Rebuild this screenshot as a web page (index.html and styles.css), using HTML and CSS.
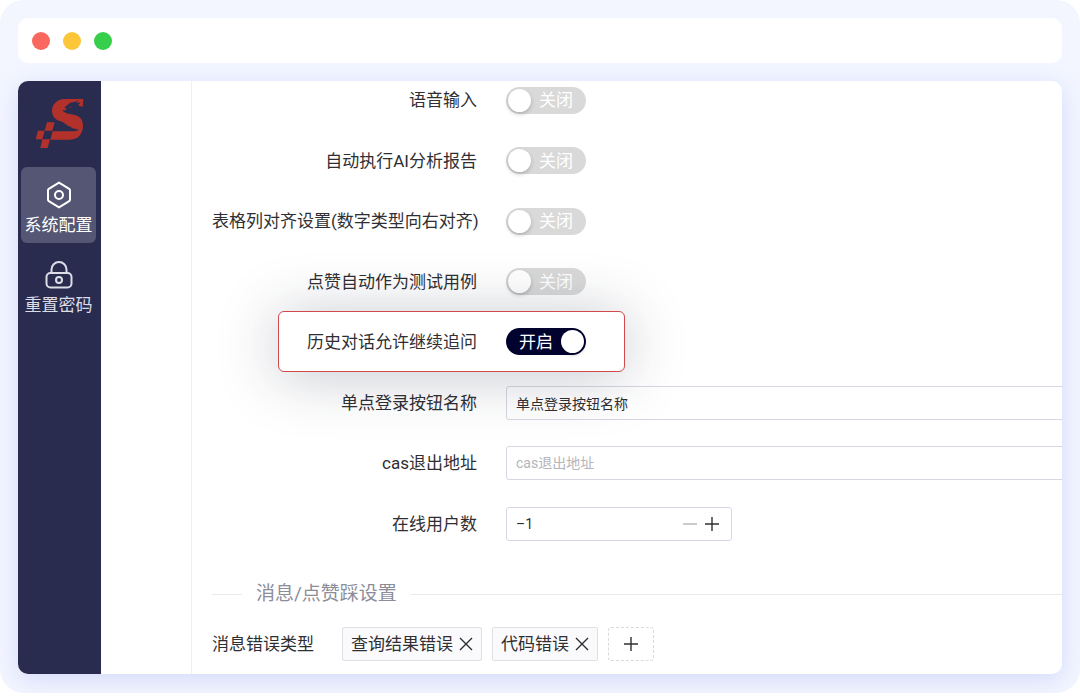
FILE: index.html
```html
<!DOCTYPE html>
<html lang="zh-CN">

<head>
    <meta charset="UTF-8">
    <meta name="viewport" content="width=device-width, initial-scale=1">
    <title>系统配置</title>
    <link rel="stylesheet" href="styles.css">
</head>

<body>
    <div class="frame">
        <header class="titlebar">
            <span class="dot red"></span>
            <span class="dot yellow"></span>
            <span class="dot green"></span>
        </header>

        <div class="window">
            <aside class="sidebar">
                <svg class="logo" viewBox="12 15 150 156" aria-hidden="true">
                    <path d="M160 21H105C80 22 66 37 66 58C67 77 79 86 96 89L106 94L102 95L114 99L111 101L126 105L122 107L147 113C142 117 134 118 124 118H68L61 143H120C145 143 158 126 159 103C160 79 143 69 124 67C110 65 100 61 97 54L107 55L110 50L103 47L113 38L121 32L136 29L145 25L139 33L153 31L144 40L158 45Z"/>
                    <path d="M51 91H74L67 116H44ZM24 116H44L37 142H17ZM37 142H60L53 168H31Z"/>
                    <circle cx="121" cy="46" r="2"/>
                </svg>
                <nav class="menu">
                    <a href="#config" class="menu-item active">
                        <svg viewBox="0 0 30 30" aria-hidden="true">
                            <path d="M15 2.6L25.2 8.8Q26 9.300 26 10.200V19.800Q26 20.700 25.200 21.200L15 27.400L4.800 21.200Q4 20.700 4 19.800V10.200Q4 9.300 4.800 8.800Z"/>
                            <circle cx="15" cy="15" r="4"/>
                        </svg>
                        系统配置
                    </a>
                    <a href="#password" class="menu-item">
                        <svg viewBox="0 0 30 30" aria-hidden="true">
                            <path d="M7.500 13V9.500A7.500 7.500 0 0 1 22.500 9.500V13"/>
                            <rect x="2.500" y="13" width="25" height="14.500" rx="4"/>
                            <circle cx="15" cy="20" r="3"/>
                        </svg>
                        重置密码
                    </a>
                </nav>
            </aside>
            <div class="submenu"></div>

            <main class="content">
                <form>
                    <div class="rows">
                        <div class="row">
                            <label class="name" for="voice">语音输入</label>
                            <label class="switch"><input type="checkbox" id="voice"><span>关闭</span></label>
                        </div>
                        <div class="row">
                            <label class="name" for="report">自动执行AI分析报告</label>
                            <label class="switch"><input type="checkbox" id="report"><span>关闭</span></label>
                        </div>
                        <div class="row">
                            <label class="name" for="align">表格列对齐设置(数字类型向右对齐)</label>
                            <label class="switch"><input type="checkbox" id="align"><span>关闭</span></label>
                        </div>
                        <div class="row">
                            <label class="name" for="like">点赞自动作为测试用例</label>
                            <label class="switch"><input type="checkbox" id="like"><span>关闭</span></label>
                        </div>
                        <div class="row highlight">
                            <label class="name" for="history">历史对话允许继续追问</label>
                            <label class="switch"><input type="checkbox" id="history" checked><span>开启</span></label>
                        </div>
                        <div class="row">
                            <label class="name" for="sso">单点登录按钮名称</label>
                            <input class="field" type="text" id="sso" value="单点登录按钮名称">
                        </div>
                        <div class="row">
                            <label class="name" for="cas">cas退出地址</label>
                            <input class="field" type="text" id="cas" placeholder="cas退出地址">
                        </div>
                        <div class="row">
                            <label class="name" for="online">在线用户数</label>
                            <div class="number">
                                <input type="text" inputmode="numeric" id="online" value="–1">
                                <button type="button" class="minus" aria-label="减少">
                                    <svg viewBox="0 0 14 14"><path d="M0 7H14"/></svg>
                                </button>
                                <button type="button" aria-label="增加">
                                    <svg viewBox="0 0 14 14"><path d="M0 7H14M7 0V14"/></svg>
                                </button>
                            </div>
                        </div>
                    </div>

                    <h2 class="divider">消息/点赞踩设置</h2>

                    <div class="tags">
                        <span class="tags-name">消息错误类型</span>
                        <span class="tag">查询结果错误
                            <button type="button" aria-label="删除查询结果错误">
                                <svg viewBox="0 0 14 14"><path d="M1 1L13 13M13 1L1 13"/></svg>
                            </button>
                        </span>
                        <span class="tag">代码错误
                            <button type="button" aria-label="删除代码错误">
                                <svg viewBox="0 0 14 14"><path d="M1 1L13 13M13 1L1 13"/></svg>
                            </button>
                        </span>
                        <button type="button" class="add" aria-label="添加">
                            <svg viewBox="0 0 14 14"><path d="M0 7H14M7 0V14"/></svg>
                        </button>
                    </div>
                </form>
            </main>
        </div>
    </div>
</body>

</html>
```
FILE: styles.css
```css
* {
    box-sizing: border-box;
    margin: 0;
    padding: 0;
}

body {
    background-color: #fff;
    color: #2f2f33;
    font-family: Roboto, "Noto Sans CJK SC", sans-serif;
    font-size: 17px;
    line-height: 24px;
}

input,
button {
    font-family: inherit;
    color: inherit;
}

button {
    display: flex;
    align-items: center;
    justify-content: center;
    border: none;
    background: none;
    cursor: pointer;
}

button svg {
    width: 14px;
    height: 14px;
    fill: none;
    stroke: currentColor;
    stroke-width: 1.4;
}

.frame {
    padding: 18px 18px 19px;
    border-radius: 24px;
    background-color: #f3f6ff;
    overflow: hidden;
}

.titlebar {
    display: flex;
    align-items: center;
    gap: 13px;
    padding: 14px 14px 13px;
    border-radius: 10px;
    background-color: #fff;
}

.dot {
    width: 18px;
    height: 18px;
    border-radius: 50%;
}

.red {
    background-color: #f9675f;
}

.yellow {
    background-color: #fbc638;
}

.green {
    background-color: #35cf4b;
}

.window {
    display: flex;
    margin-top: 18px;
    border-radius: 10px;
    background-color: #fff;
    box-shadow: 0 6px 24px rgba(90, 112, 230, 0.2);
    overflow: hidden;
}

/* sidebar */
.sidebar {
    flex: none;
    width: 83px;
    padding: 16px 5px 16px 3px;
    background-color: #292c4f;
}

.logo {
    display: block;
    width: 50px;
    height: 52px;
    margin: 0 auto 18px 13px;
    fill: #b2322b;
}

.menu {
    display: flex;
    flex-direction: column;
    gap: 4px;
}

.menu-item {
    display: flex;
    flex-direction: column;
    align-items: center;
    padding: 13px 0 6px;
    gap: 3px;
    border-radius: 6px;
    color: #dcdde6;
    text-decoration: none;
    white-space: nowrap;
}

.menu-item svg {
    width: 30px;
    height: 30px;
    fill: none;
    stroke: currentColor;
    stroke-width: 2;
    stroke-linejoin: round;
}

.menu-item.active {
    background-color: #545673;
    color: #fff;
}

.submenu {
    flex: none;
    width: 91px;
    border-right: 1px solid #f0f0f3;
}

/* settings form */
.content {
    flex: 1;
    min-width: 0;
    padding: 2px 0 13px 20px;
}

.rows {
    display: flex;
    flex-direction: column;
    justify-content: space-between;
    min-height: 458px;
}

.row {
    display: flex;
    align-items: center;
    gap: 29px;
    height: 34px;
}

.name {
    flex: none;
    width: 265px;
    text-align: right;
    white-space: nowrap;
}

.switch {
    display: flex;
    align-items: center;
    gap: 8px;
    width: 80px;
    height: 27px;
    padding: 0 2px;
    border-radius: 14px;
    background-color: #d9d9d9;
    color: #fff;
    cursor: pointer;
}

.switch input {
    appearance: none;
    width: 23px;
    height: 23px;
    border-radius: 50%;
    background-color: #fff;
    box-shadow: 0 2px 4px rgba(0, 0, 0, 0.2);
}

.switch:has(:checked) {
    flex-direction: row-reverse;
    background-color: #02022f;
}

.highlight {
    position: relative;
    align-self: flex-start;
    height: 61px;
    margin: -14px 0 -13px 66px;
    padding: 0 38px 0 28px;
    border: 1px solid #d0494b;
    border-radius: 6px;
    background-color: #fff;
    box-shadow: 0 4px 60px rgba(30, 40, 60, 0.26);
}

.highlight .name {
    width: auto;
}

.field {
    flex: 1;
    min-width: 0;
    height: 34px;
    margin-right: -8px;
    padding: 0 9px;
    border: 1px solid #d6d7e2;
    border-radius: 3px;
    background-color: transparent;
    font-size: 14px;
}

.field::placeholder {
    color: #b4b5bb;
}

.number {
    display: flex;
    align-items: center;
    gap: 8px;
    width: 226px;
    height: 34px;
    padding: 0 12px 0 9px;
    border: 1px solid #d6d7e2;
    border-radius: 3px;
}

.number input {
    flex: 1;
    min-width: 0;
    border: none;
    outline: none;
    font-size: 14px;
}

.minus {
    color: #b4b5bb;
}

.divider {
    display: flex;
    align-items: center;
    gap: 14px;
    margin: 39px 0 19px;
    color: #8c8d99;
    font-size: 19px;
    font-weight: 400;
    line-height: 28px;
}

.divider::before,
.divider::after {
    content: "";
    width: 30px;
    height: 1px;
    background-color: #e9e9ed;
}

.divider::after {
    flex: 1;
}

.tags {
    display: flex;
    align-items: center;
    gap: 10px;
}

.tags-name {
    margin-right: 18px;
}

.tag {
    display: flex;
    align-items: center;
    gap: 6px;
    height: 34px;
    padding: 0 8px;
    border: 1px solid #e0e0e5;
    border-radius: 2px;
    background-color: #fafafc;
}

.add {
    width: 46px;
    height: 34px;
    border: 1px dashed #d9d9de;
    border-radius: 3px;
}
```
